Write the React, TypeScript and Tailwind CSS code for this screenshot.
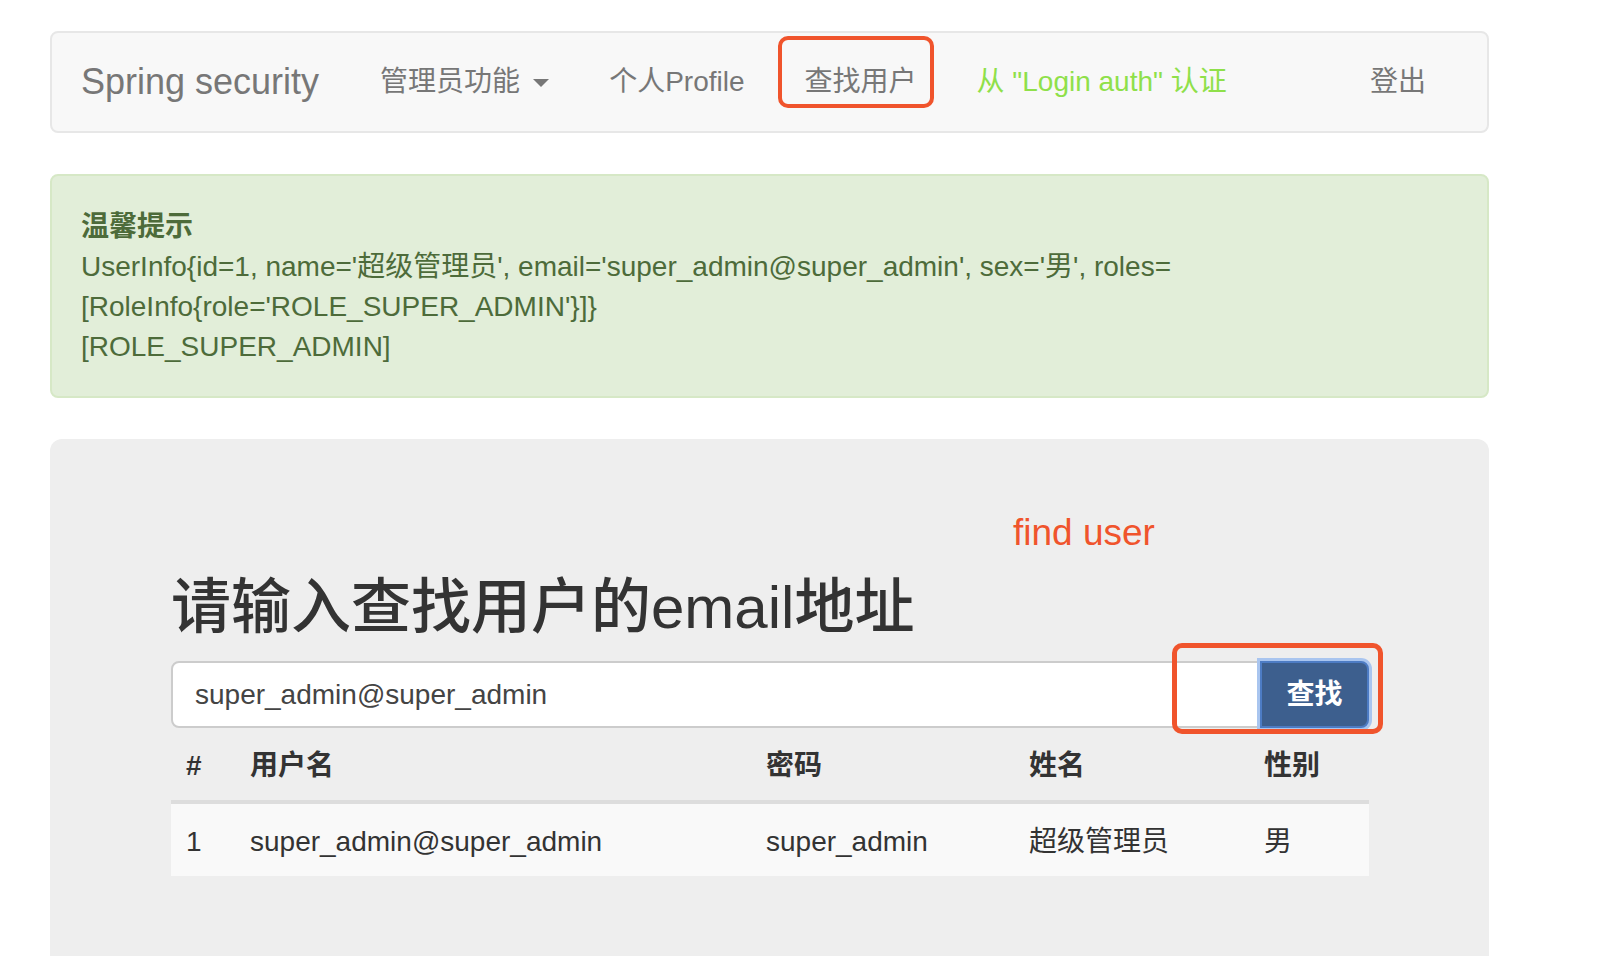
const NAV_LINKS = ["个人Profile"];

const COLUMNS = ["#", "用户名", "密码", "姓名", "性别"];

const USERS = [
    { id: 1, username: "super_admin@super_admin", password: "super_admin", name: "超级管理员", sex: "男" },
];

// fixed column widths so the table lines up with the input group above
const gridCols = "grid grid-cols-[64px_516px_263px_235px_120px]";

export default function App() {
    return (
        <div className="h-[956px] w-[1606px] overflow-hidden bg-white font-['Liberation_Sans','Noto_Sans_CJK_SC',sans-serif]">
            <div className="ml-[50px] w-[1439px] pt-[31px]">
                {/* Navbar */}
                <nav className="flex h-[102px] items-stretch rounded-[8px] border-2 border-[#e7e7e7] bg-[#f8f8f8] text-[28px] text-[#777]">
                    <a className="flex items-center pl-[29px] pr-[31px] text-[36px] text-[#777]">Spring security</a>
                    <a className="flex items-center px-[30px]">
                        管理员功能
                        <span className="ml-[13px] mt-[2px] h-0 w-0 border-x-[8px] border-t-[8px] border-x-transparent border-t-[#777]" />
                    </a>
                    {NAV_LINKS.map((link) => (
                        <a key={link} className="flex items-center px-[30px]">
                            {link}
                        </a>
                    ))}
                    <a className="relative flex items-center px-[30px]">
                        查找用户
                        {/* annotation box */}
                        <span className="absolute left-[3px] top-[3px] h-[72px] w-[156px] rounded-[10px] border-[4px] border-[#f0542c]" />
                    </a>
                    <a className="flex items-center px-[30px] text-[#8fe04a]">从 "Login auth" 认证</a>
                    <a className="ml-auto mr-[31px] flex items-center px-[30px]">登出</a>
                </nav>

                {/* Alert */}
                <div className="mt-[41px] rounded-[8px] border-2 border-[#d6e8c6] bg-[#e2eed9] px-[29px] pb-[29px] pt-[31px] text-[28px] leading-[40px] text-[#4d6b3a]">
                    <div className="font-bold">温馨提示</div>
                    <div className="whitespace-nowrap">
                        UserInfo{"{"}id=1, name='超级管理员', email='super_admin@super_admin', sex='男', roles=
                    </div>
                    <div className="whitespace-nowrap">[RoleInfo{"{"}role='ROLE_SUPER_ADMIN'{"}"}]{"}"}</div>
                    <div className="whitespace-nowrap">[ROLE_SUPER_ADMIN]</div>
                </div>

                {/* Jumbotron */}
                <div className="relative mt-[41px] rounded-[12px] bg-[#eee] pb-[97px] pl-[121px] pr-[120px] pt-[136px]">
                    <span className="absolute left-[963px] top-[75px] text-[37px] leading-[37px] text-[#f0542c]">find user</span>

                    <h1 className="mb-[20px] text-[60px] font-medium leading-[66px] text-[#333]">请输入查找用户的email地址</h1>

                    <div className="relative flex h-[67px]">
                        <input
                            readOnly
                            value="super_admin@super_admin"
                            className="h-full min-w-0 flex-1 rounded-l-[8px] border-2 border-[#ccc] bg-white px-[22px] text-[28px] text-[#444] outline-none"
                        />
                        <button className="relative z-10 -ml-[2px] h-full w-[109px] rounded-r-[8px] border-2 border-[#4d7cc4] bg-[#3d5f8e] text-[28px] font-bold text-white shadow-[0_0_0_3px_#a9c5ef]">
                            查找
                        </button>
                        {/* annotation box */}
                        <span className="absolute left-[1001px] top-[-18px] z-20 h-[91px] w-[211px] rounded-[10px] border-[5px] border-[#f0542c]" />
                    </div>

                    {/* Result table */}
                    <div className="text-[28px] leading-[40px] text-[#333]">
                        <div className={`${gridCols} h-[76px] items-center border-b-4 border-[#ddd] pt-[4px] font-bold`}>
                            {COLUMNS.map((col) => (
                                <div key={col} className="px-[15px]">
                                    {col}
                                </div>
                            ))}
                        </div>
                        {USERS.map((user) => (
                            <div key={user.id} className={`${gridCols} h-[72px] items-center bg-[#f9f9f9] pt-[4px]`}>
                                <div className="px-[15px]">{user.id}</div>
                                <div className="px-[15px]">{user.username}</div>
                                <div className="px-[15px]">{user.password}</div>
                                <div className="px-[15px]">{user.name}</div>
                                <div className="px-[15px]">{user.sex}</div>
                            </div>
                        ))}
                    </div>
                </div>
            </div>
        </div>
    );
}
